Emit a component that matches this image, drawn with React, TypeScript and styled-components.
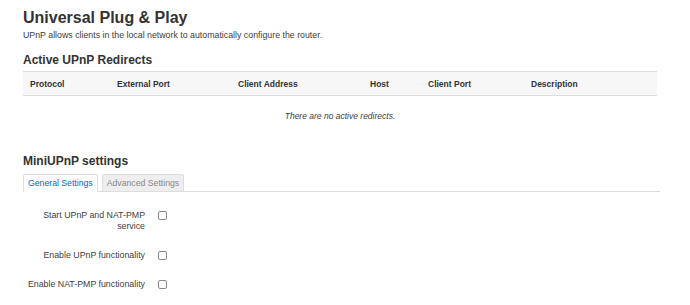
import * as React from "react";
import styled, { createGlobalStyle } from "styled-components";

const GlobalStyle = createGlobalStyle`
  html, body {
    margin: 0;
    padding: 0;
    background: #ffffff;
  }
  body {
    font-family: "Liberation Sans", Arial, Helvetica, sans-serif;
    color: #404040;
  }
`;

const columns = [
  { title: "Protocol", width: 87 },
  { title: "External Port", width: 121 },
  { title: "Client Address", width: 132 },
  { title: "Host", width: 58 },
  { title: "Client Port", width: 103 },
  { title: "Description", width: 133 },
];

const options = [
  "Start UPnP and NAT-PMP service",
  "Enable UPnP functionality",
  "Enable NAT-PMP functionality",
];

export default function App() {
  return (
    <Page>
      <GlobalStyle />
      <Title>Universal Plug &amp; Play</Title>
      <Intro>UPnP allows clients in the local network to automatically configure the router.</Intro>

      <SectionTitle>Active UPnP Redirects</SectionTitle>
      <Table>
        <HeadRow>
          {columns.map((c) => (
            <HeadCell key={c.title} $width={c.width}>
              {c.title}
            </HeadCell>
          ))}
        </HeadRow>
        <EmptyRow>There are no active redirects.</EmptyRow>
      </Table>

      <SectionTitle $top={18}>MiniUPnP settings</SectionTitle>
      <Tabs>
        <Tab $active>General Settings</Tab>
        <Tab>Advanced Settings</Tab>
      </Tabs>

      <Form>
        {options.map((o) => (
          <FieldRow key={o}>
            <FieldLabel>{o}</FieldLabel>
            <Check type="checkbox" />
          </FieldRow>
        ))}
      </Form>
    </Page>
  );
}

const Page = styled.div`
  width: 690px;
  height: 305px;
  box-sizing: border-box;
  padding: 8px 33px 0 23px;
  overflow: hidden;
`;

const Title = styled.h1`
  margin: 0;
  font-size: 16px;
  line-height: 20px;
  font-weight: bold;
  color: #333333;
`;

const Intro = styled.p`
  margin: 2px 0 0;
  font-size: 8.8px;
  line-height: 10px;
  color: #404040;
`;

const SectionTitle = styled.h2<{ $top?: number }>`
  margin: ${(p) => p.$top ?? 13}px 0 0;
  font-size: 12px;
  line-height: 14px;
  font-weight: bold;
  color: #333333;
`;

const Table = styled.div`
  margin-top: 4px;
  width: 634px;
`;

const HeadRow = styled.div`
  display: flex;
  height: 25px;
  align-items: center;
  box-sizing: border-box;
  background: #f7f7f7;
  border-top: 1px solid #dddddd;
  border-bottom: 1px solid #dddddd;
`;

const HeadCell = styled.div<{ $width: number }>`
  width: ${(p) => p.$width}px;
  padding-left: 7px;
  box-sizing: border-box;
  font-size: 8.5px;
  font-weight: bold;
  color: #333333;
`;

const EmptyRow = styled.div`
  height: 40px;
  display: flex;
  align-items: center;
  justify-content: center;
  font-size: 8.5px;
  font-style: italic;
  color: #404040;
`;

const Tabs = styled.div`
  display: flex;
  gap: 4px;
  margin-top: 6px;
  width: 637px;
  border-bottom: 1px solid #dddddd;
`;

const Tab = styled.div<{ $active?: boolean }>`
  height: 16px;
  margin-bottom: -1px;
  padding: 0 4px;
  display: flex;
  align-items: center;
  font-size: 8.7px;
  border: 1px solid #dddddd;
  border-bottom-color: ${(p) => (p.$active ? "#ffffff" : "#dddddd")};
  border-radius: 2px 2px 0 0;
  background: ${(p) => (p.$active ? "#ffffff" : "#eeeeee")};
  color: ${(p) => (p.$active ? "#0069d6" : "#888888")};
`;

const Form = styled.div`
  display: flex;
  flex-direction: column;
  gap: 18px;
  margin-top: 18px;
`;

const FieldRow = styled.div`
  display: flex;
  align-items: flex-start;
  gap: 13px;
`;

const FieldLabel = styled.label`
  width: 122px;
  text-align: right;
  font-size: 8.8px;
  line-height: 11px;
  color: #404040;
`;

const Check = styled.input`
  appearance: none;
  width: 9px;
  height: 9px;
  margin: 1px 0 0;
  border: 1px solid #8a8a8a;
  border-radius: 2px;
  background: #ffffff;
  box-sizing: border-box;
`;
